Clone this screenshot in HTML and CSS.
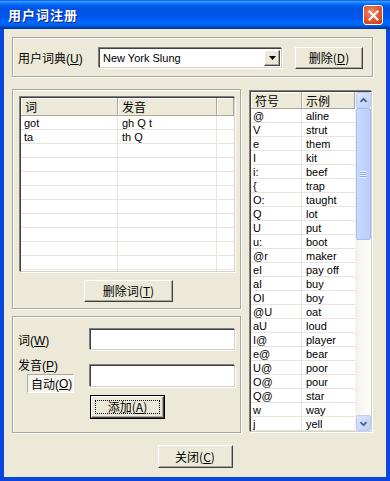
FILE: index.html
```html
<!DOCTYPE html>
<html lang="zh-CN">
<head>
  <meta charset="UTF-8" />
  <title>用户词注册</title>
  <link rel="stylesheet" href="styles.css">
</head>
<body>
  <div class="window">
    <div class="titlebar">
      <span class="title">用户词注册</span>
      <span class="close">
        <svg width="11" height="11" viewBox="0 0 11 11"><path d="M1.5 1.5 L9.5 9.5 M9.5 1.5 L1.5 9.5" stroke="#fff" stroke-width="2" stroke-linecap="square"/></svg>
      </span>
    </div>

    <div class="client">
      <div class="group dict-group">
        <span class="dict-label">用户词典(<u>U</u>)</span>
        <div class="combo sunken">
          <span class="combo-text">New York Slung</span>
          <span class="combo-drop">
            <svg width="7" height="4" viewBox="0 0 7 4"><path d="M0 0 H7 L3.5 4 Z" fill="#000"/></svg>
          </span>
        </div>
        <button class="btn btn-del">删除(<u>D</u>)</button>
      </div>

      <div class="main">
        <div class="left">
          <div class="group words-group">
            <div class="words-list sunken">
              <div class="lv-head">
                <span class="hc w-word">词</span>
                <span class="hc w-pron">发音</span>
                <span class="hc w-rest"></span>
              </div>
              <div class="lv-row"><span class="w-word">got</span><span class="w-pron">gh Q t</span><span class="w-rest"></span></div>
              <div class="lv-row"><span class="w-word">ta</span><span class="w-pron">th Q</span><span class="w-rest"></span></div>
              <div class="lv-row"><span class="w-word"></span><span class="w-pron"></span><span class="w-rest"></span></div>
              <div class="lv-row"><span class="w-word"></span><span class="w-pron"></span><span class="w-rest"></span></div>
              <div class="lv-row"><span class="w-word"></span><span class="w-pron"></span><span class="w-rest"></span></div>
              <div class="lv-row"><span class="w-word"></span><span class="w-pron"></span><span class="w-rest"></span></div>
              <div class="lv-row"><span class="w-word"></span><span class="w-pron"></span><span class="w-rest"></span></div>
              <div class="lv-row"><span class="w-word"></span><span class="w-pron"></span><span class="w-rest"></span></div>
              <div class="lv-row"><span class="w-word"></span><span class="w-pron"></span><span class="w-rest"></span></div>
              <div class="lv-row"><span class="w-word"></span><span class="w-pron"></span><span class="w-rest"></span></div>
              <div class="lv-row"><span class="w-word"></span><span class="w-pron"></span><span class="w-rest"></span></div>
              <div class="lv-row"><span class="w-word"></span><span class="w-pron"></span><span class="w-rest"></span></div>
            </div>
            <button class="btn btn-delword">删除词(<u>T</u>)</button>
          </div>

          <div class="group add-group">
            <div class="add-row">
              <span class="add-label">词(<u>W</u>)</span>
              <div class="field sunken"></div>
            </div>
            <div class="add-row pron-row">
              <div class="pron-left">
                <span class="pron-label">发音(<u>P</u>)</span>
                <span class="auto-box">自动(<u>O</u>)</span>
              </div>
              <div class="field field-pron sunken"></div>
            </div>
            <div class="add-row btn-row">
              <button class="btn btn-add"><span class="focus">添加(<u>A</u>)</span></button>
            </div>
          </div>
        </div>

        <div class="symbols sunken">
          <div class="sym-list">
            <div class="lv-head">
              <span class="hc s-sym">符号</span>
              <span class="hc s-ex">示例</span>
            </div>
            <div class="lv-row"><span class="s-sym">@</span><span class="s-ex">aline</span></div>
            <div class="lv-row"><span class="s-sym">V</span><span class="s-ex">strut</span></div>
            <div class="lv-row"><span class="s-sym">e</span><span class="s-ex">them</span></div>
            <div class="lv-row"><span class="s-sym">I</span><span class="s-ex">kit</span></div>
            <div class="lv-row"><span class="s-sym">i:</span><span class="s-ex">beef</span></div>
            <div class="lv-row"><span class="s-sym">{</span><span class="s-ex">trap</span></div>
            <div class="lv-row"><span class="s-sym">O:</span><span class="s-ex">taught</span></div>
            <div class="lv-row"><span class="s-sym">Q</span><span class="s-ex">lot</span></div>
            <div class="lv-row"><span class="s-sym">U</span><span class="s-ex">put</span></div>
            <div class="lv-row"><span class="s-sym">u:</span><span class="s-ex">boot</span></div>
            <div class="lv-row"><span class="s-sym">@r</span><span class="s-ex">maker</span></div>
            <div class="lv-row"><span class="s-sym">eI</span><span class="s-ex">pay off</span></div>
            <div class="lv-row"><span class="s-sym">aI</span><span class="s-ex">buy</span></div>
            <div class="lv-row"><span class="s-sym">OI</span><span class="s-ex">boy</span></div>
            <div class="lv-row"><span class="s-sym">@U</span><span class="s-ex">oat</span></div>
            <div class="lv-row"><span class="s-sym">aU</span><span class="s-ex">loud</span></div>
            <div class="lv-row"><span class="s-sym">I@</span><span class="s-ex">player</span></div>
            <div class="lv-row"><span class="s-sym">e@</span><span class="s-ex">bear</span></div>
            <div class="lv-row"><span class="s-sym">U@</span><span class="s-ex">poor</span></div>
            <div class="lv-row"><span class="s-sym">O@</span><span class="s-ex">pour</span></div>
            <div class="lv-row"><span class="s-sym">Q@</span><span class="s-ex">star</span></div>
            <div class="lv-row"><span class="s-sym">w</span><span class="s-ex">way</span></div>
            <div class="lv-row"><span class="s-sym">j</span><span class="s-ex">yell</span></div>
          </div>
          <div class="scrollbar">
            <div class="sb-btn">
              <svg width="15" height="15" viewBox="0 0 15 15"><path d="M4 9 L7.5 5.5 L11 9" fill="none" stroke="#4d6185" stroke-width="2"/></svg>
            </div>
            <div class="sb-track">
              <div class="sb-thumb"><span class="grip"></span></div>
            </div>
            <div class="sb-btn">
              <svg width="15" height="15" viewBox="0 0 15 15"><path d="M4 6 L7.5 9.5 L11 6" fill="none" stroke="#4d6185" stroke-width="2"/></svg>
            </div>
          </div>
        </div>
      </div>

      <div class="footer">
        <button class="btn btn-close">关闭(<u>C</u>)</button>
      </div>
    </div>
  </div>
</body>
</html>
```

FILE: styles.css
```css
* {
  box-sizing: border-box;
}

body {
  margin: 0;
  width: 390px;
  height: 481px;
  overflow: hidden;
  font-family: "Liberation Sans", "Noto Sans CJK SC", sans-serif;
  font-size: 11px;
  color: #000;
}

u {
  text-decoration: underline;
}

.window {
  width: 390px;
  height: 481px;
  background: #0a46dc;
  display: flex;
  flex-direction: column;
}

.titlebar {
  height: 29px;
  flex-shrink: 0;
  display: flex;
  align-items: center;
  justify-content: space-between;
  padding: 0 7px 0 8px;
  background: linear-gradient(to bottom, #0058ee 0%, #3593ff 5%, #288eff 8%, #127dff 11%, #036ffc 14%, #0262ee 18%, #0057e5 24%, #0054e3 30%, #0055eb 56%, #005bf5 66%, #026afe 76%, #0062ef 86%, #0052d6 92%, #0040ab 96%, #003092 100%);
}

.title {
  color: #fff;
  font-family: "Noto Sans CJK SC", sans-serif;
  font-size: 13px;
  font-weight: bold;
  letter-spacing: 1px;
  text-shadow: 1px 1px 0 #0a1e8c;
}

.close {
  width: 20px;
  height: 20px;
  border: 1px solid #fff;
  border-radius: 3px;
  background: radial-gradient(circle at 40% 35%, #ef8a6a 0%, #e0552e 55%, #c23c12 100%);
  display: flex;
  align-items: center;
  justify-content: center;
  margin-top: 1px;
}

.client {
  flex: 1;
  margin: 0 4px 4px 4px;
  background: #ece9d8;
  padding: 8px 0 0 8px;
}

.group {
  border: 1px solid #aca899;
  box-shadow: inset 1px 1px 0 #fff, 1px 1px 0 #fff;
}

.sunken {
  border: 1px solid;
  border-color: #404040 #d4d0c8 #d4d0c8 #404040;
  box-shadow: -1px -1px 0 #808080, 1px 1px 0 #fff;
  background: #fff;
}

.btn {
  font-family: "Noto Sans CJK SC", sans-serif;
  font-size: 12px;
  background: #ece9d8;
  border: 1px solid;
  border-color: #fff #404040 #404040 #fff;
  box-shadow: inset -1px -1px 0 #aca899;
  padding: 0;
  color: #000;
  line-height: 1;
}

/* top: dictionary */
.dict-group {
  width: 361px;
  height: 40px;
  display: flex;
  align-items: center;
  padding-left: 5px;
}

.dict-label {
  width: 81px;
  font-size: 12px;
}

.combo {
  width: 183px;
  height: 20px;
  margin-top: 1px;
  display: flex;
  align-items: center;
  justify-content: space-between;
  padding: 0 1px 0 3px;
}

.combo-text {
  font-size: 11px;
}

.combo-drop {
  width: 16px;
  height: 16px;
  background: #ece9d8;
  border: 1px solid;
  border-color: #fff #404040 #404040 #fff;
  box-shadow: inset -1px -1px 0 #aca899;
  display: flex;
  align-items: center;
  justify-content: center;
}

.btn-del {
  width: 68px;
  height: 22px;
  margin-left: 13px;
  margin-top: 1px;
}

/* main area */
.main {
  display: flex;
  gap: 8px;
  margin-top: 12px;
}

.left {
  width: 229px;
  display: flex;
  flex-direction: column;
  gap: 7px;
}

.words-group {
  height: 220px;
  padding: 7px 0 0 7px;
  display: flex;
  flex-direction: column;
}

.words-list {
  width: 215px;
  height: 175px;
  overflow: hidden;
}

.lv-head {
  display: flex;
  background: #ece9d8;
}

.hc {
  height: 18px;
  display: flex;
  align-items: center;
  font-size: 12px;
  padding-left: 4px;
  border-right: 1px solid #aca899;
  border-bottom: 1px solid #aca899;
  box-shadow: inset 1px 1px 0 #fff;
}

.lv-row {
  display: flex;
  height: 14px;
  border-bottom: 1px solid #e6e4dc;
}

.lv-row span {
  display: flex;
  align-items: center;
  padding-left: 3px;
  border-right: 1px solid #e6e4dc;
  white-space: nowrap;
}

.w-word {
  width: 97px;
}

.w-pron {
  width: 99px;
}

.words-list .lv-row .w-pron {
  padding-left: 4px;
}

.w-rest {
  flex: 1;
}

.lv-row .w-rest {
  border-right: none;
}

.btn-delword {
  width: 89px;
  height: 22px;
  margin: 8px 0 0 64px;
}

.add-group {
  height: 117px;
  padding: 12px 0 0 5px;
}

.add-row {
  display: flex;
  align-items: center;
}

.add-label {
  width: 72px;
  font-size: 12px;
}

.field {
  width: 145px;
  height: 21px;
}

.pron-row {
  margin-top: 9px;
  align-items: flex-start;
}

.pron-left {
  width: 72px;
  display: flex;
  flex-direction: column;
  align-items: flex-start;
  font-size: 12px;
}

.pron-label {
  line-height: 14px;
}

.auto-box {
  margin: 1px 0 0 9px;
  width: 47px;
  height: 19px;
  display: flex;
  align-items: center;
  padding-left: 3px;
  background: #f5f4ef;
  border: 1px solid;
  border-color: #aca899 #fff #fff #aca899;
}

.field-pron {
  margin-top: 6px;
  height: 22px;
}

.btn-row {
  margin-top: 3px;
  padding-left: 73px;
}

.btn-add {
  width: 73px;
  height: 22px;
  outline: 1px solid #000;
  padding: 3px;
}

.focus {
  display: flex;
  align-items: center;
  justify-content: center;
  height: 100%;
  border: 1px dotted #000;
}

/* phonetic symbols */
.symbols {
  width: 122px;
  height: 341px;
  margin-top: 2px;
  margin-left: 1px;
  display: flex;
  overflow: hidden;
}

.sym-list {
  width: 104px;
}

.symbols .hc {
  height: 17px;
}

.symbols .lv-row span {
  padding-left: 2px;
}

.s-sym {
  width: 51px;
}

.s-ex {
  width: 53px;
}

.symbols .lv-row .s-ex {
  padding-left: 4px;
  border-right: none;
}

.scrollbar {
  width: 16px;
  display: flex;
  flex-direction: column;
  background: linear-gradient(to right, #f3f1ec, #fefefb);
}

.sb-btn {
  height: 16px;
  margin: 0 0 0 1px;
  border: 1px solid #bccdf5;
  border-radius: 2px;
  background: linear-gradient(135deg, #dbe5fd, #bdd0fb);
  display: flex;
  align-items: center;
  justify-content: center;
}

.sb-track {
  flex: 1;
}

.sb-thumb {
  height: 132px;
  margin-left: 1px;
  border: 1px solid #a5bdf4;
  border-radius: 2px;
  background: linear-gradient(to right, #cad9fd, #b9cdfb);
  display: flex;
  align-items: center;
  justify-content: center;
}

.grip {
  width: 7px;
  height: 7px;
  background: repeating-linear-gradient(to bottom, #eef3ff 0 1px, #8fa9e8 1px 2px);
}

.footer {
  display: flex;
  justify-content: center;
  margin-top: 12px;
  padding-right: 8px;
}

.btn-close {
  width: 75px;
  height: 23px;
}
```
